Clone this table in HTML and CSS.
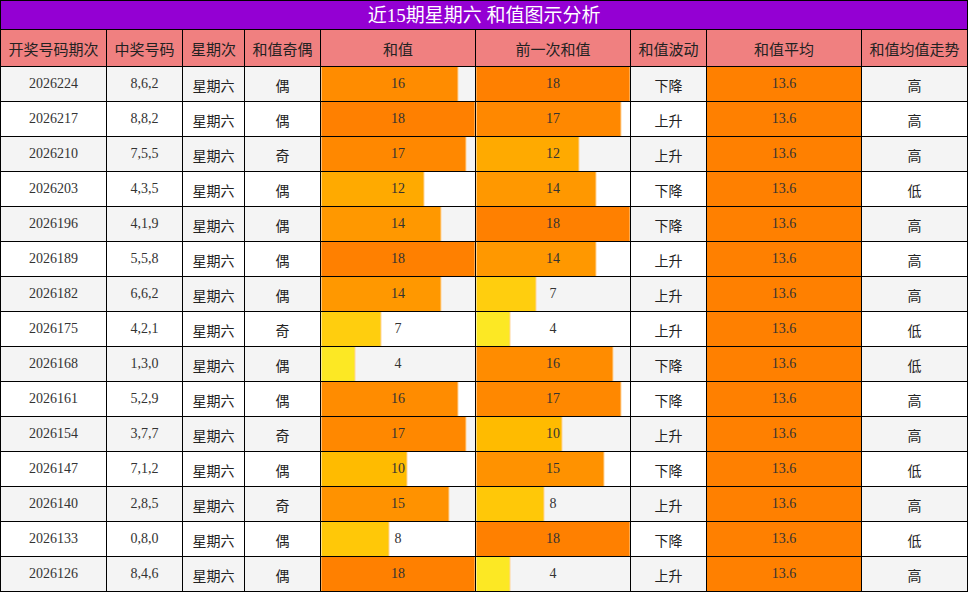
FILE: index.html
```html
<!DOCTYPE html>
<html lang="zh">
<head>
<meta charset="utf-8">
<title>近15期星期六 和值图示分析</title>
<link rel="stylesheet" href="styles.css">
</head>
<body>
<table class="sum-table">
  <colgroup>
    <col class="c-issue"><col class="c-num"><col class="c-week"><col class="c-parity">
    <col class="c-bar"><col class="c-bar"><col class="c-trend"><col class="c-bar"><col class="c-issue">
  </colgroup>
  <thead>
    <tr class="title-row"><th colspan="9">近15期星期六 和值图示分析</th></tr>
    <tr class="head-row">
      <th>开奖号码期次</th><th>中奖号码</th><th>星期次</th><th>和值奇偶</th>
      <th>和值</th><th>前一次和值</th><th>和值波动</th><th>和值平均</th><th>和值均值走势</th>
    </tr>
  </thead>
  <tbody>
    <tr><td class="num">2026224</td><td class="num">8,6,2</td><td>星期六</td><td>偶</td><td class="num bar" style="--w:88.89%;--c:#ff8c00">16</td><td class="num bar" style="--w:100%;--c:#ff8000">18</td><td>下降</td><td class="num avg">13.6</td><td>高</td></tr>
    <tr><td class="num">2026217</td><td class="num">8,8,2</td><td>星期六</td><td>偶</td><td class="num bar" style="--w:100%;--c:#ff8000">18</td><td class="num bar" style="--w:94.44%;--c:#ff8800">17</td><td>上升</td><td class="num avg">13.6</td><td>高</td></tr>
    <tr><td class="num">2026210</td><td class="num">7,5,5</td><td>星期六</td><td>奇</td><td class="num bar" style="--w:94.44%;--c:#ff8800">17</td><td class="num bar" style="--w:66.67%;--c:#ffaa00">12</td><td>上升</td><td class="num avg">13.6</td><td>高</td></tr>
    <tr><td class="num">2026203</td><td class="num">4,3,5</td><td>星期六</td><td>偶</td><td class="num bar" style="--w:66.67%;--c:#ffaa00">12</td><td class="num bar" style="--w:77.78%;--c:#ff9800">14</td><td>下降</td><td class="num avg">13.6</td><td>低</td></tr>
    <tr><td class="num">2026196</td><td class="num">4,1,9</td><td>星期六</td><td>偶</td><td class="num bar" style="--w:77.78%;--c:#ff9800">14</td><td class="num bar" style="--w:100%;--c:#ff8000">18</td><td>下降</td><td class="num avg">13.6</td><td>高</td></tr>
    <tr><td class="num">2026189</td><td class="num">5,5,8</td><td>星期六</td><td>偶</td><td class="num bar" style="--w:100%;--c:#ff8000">18</td><td class="num bar" style="--w:77.78%;--c:#ff9800">14</td><td>上升</td><td class="num avg">13.6</td><td>高</td></tr>
    <tr><td class="num">2026182</td><td class="num">6,6,2</td><td>星期六</td><td>偶</td><td class="num bar" style="--w:77.78%;--c:#ff9800">14</td><td class="num bar" style="--w:38.89%;--c:#ffce0e">7</td><td>上升</td><td class="num avg">13.6</td><td>高</td></tr>
    <tr><td class="num">2026175</td><td class="num">4,2,1</td><td>星期六</td><td>奇</td><td class="num bar" style="--w:38.89%;--c:#ffce0e">7</td><td class="num bar" style="--w:22.22%;--c:#fce824">4</td><td>上升</td><td class="num avg">13.6</td><td>低</td></tr>
    <tr><td class="num">2026168</td><td class="num">1,3,0</td><td>星期六</td><td>偶</td><td class="num bar" style="--w:22.22%;--c:#fce824">4</td><td class="num bar" style="--w:88.89%;--c:#ff8c00">16</td><td>下降</td><td class="num avg">13.6</td><td>低</td></tr>
    <tr><td class="num">2026161</td><td class="num">5,2,9</td><td>星期六</td><td>偶</td><td class="num bar" style="--w:88.89%;--c:#ff8c00">16</td><td class="num bar" style="--w:94.44%;--c:#ff8800">17</td><td>下降</td><td class="num avg">13.6</td><td>高</td></tr>
    <tr><td class="num">2026154</td><td class="num">3,7,7</td><td>星期六</td><td>奇</td><td class="num bar" style="--w:94.44%;--c:#ff8800">17</td><td class="num bar" style="--w:55.56%;--c:#ffbb00">10</td><td>上升</td><td class="num avg">13.6</td><td>高</td></tr>
    <tr><td class="num">2026147</td><td class="num">7,1,2</td><td>星期六</td><td>偶</td><td class="num bar" style="--w:55.56%;--c:#ffbb00">10</td><td class="num bar" style="--w:83.33%;--c:#ff9200">15</td><td>下降</td><td class="num avg">13.6</td><td>低</td></tr>
    <tr><td class="num">2026140</td><td class="num">2,8,5</td><td>星期六</td><td>奇</td><td class="num bar" style="--w:83.33%;--c:#ff9200">15</td><td class="num bar" style="--w:44.44%;--c:#ffc808">8</td><td>上升</td><td class="num avg">13.6</td><td>高</td></tr>
    <tr><td class="num">2026133</td><td class="num">0,8,0</td><td>星期六</td><td>偶</td><td class="num bar" style="--w:44.44%;--c:#ffc808">8</td><td class="num bar" style="--w:100%;--c:#ff8000">18</td><td>下降</td><td class="num avg">13.6</td><td>低</td></tr>
    <tr><td class="num">2026126</td><td class="num">8,4,6</td><td>星期六</td><td>偶</td><td class="num bar" style="--w:100%;--c:#ff8000">18</td><td class="num bar" style="--w:22.22%;--c:#fce824">4</td><td>上升</td><td class="num avg">13.6</td><td>高</td></tr>
  </tbody>
</table>
</body>
</html>
```
FILE: styles.css
```css
html, body {
  margin: 0;
  padding: 0;
  background: #ffffff;
}

body {
  font-family: "Liberation Serif", "Noto Sans CJK SC", serif;
  color: #333333;
}

.sum-table {
  width: 968px;
  border-collapse: collapse;
  table-layout: fixed;
}

.c-issue { width: 106px; }
.c-num { width: 76px; }
.c-week { width: 62px; }
.c-parity { width: 76px; }
.c-bar { width: 155px; }
.c-trend { width: 76px; }

.sum-table th,
.sum-table td {
  border: 1px solid #000000;
  padding: 0;
  text-align: center;
  vertical-align: middle;
  white-space: nowrap;
  overflow: hidden;
}

.title-row th {
  height: 28px;
  background: #9400d3;
  color: #ffffff;
  font-family: "Liberation Serif", "Noto Sans CJK SC", sans-serif;
  font-weight: normal;
  font-size: 19px;
  line-height: 27px;
}

.head-row th {
  height: 36px;
  background: #f08080;
  color: #222222;
  font-family: "Noto Sans CJK SC", sans-serif;
  font-weight: normal;
  font-size: 15px;
}

.sum-table tbody td {
  height: 32px;
  font-family: "Noto Sans CJK SC", sans-serif;
  font-size: 14px;
  color: #222222;
  padding-top: 2px;
}

.sum-table tbody td.num {
  font-family: "Liberation Serif", serif;
  font-size: 14px;
  color: #333333;
  padding-top: 1px;
  padding-bottom: 1px;
}

.sum-table tbody tr:nth-child(odd) {
  background: #f4f4f4;
}

.sum-table tbody tr:nth-child(even) {
  background: #ffffff;
}

.sum-table tbody td.bar {
  background-image: linear-gradient(90deg,
    var(--c) calc(var(--w) - 1px),
    #ffd49a calc(var(--w) - 1px),
    #ffd49a var(--w),
    transparent var(--w));
}

.sum-table tbody td.avg {
  background: #ff8000;
}
```
